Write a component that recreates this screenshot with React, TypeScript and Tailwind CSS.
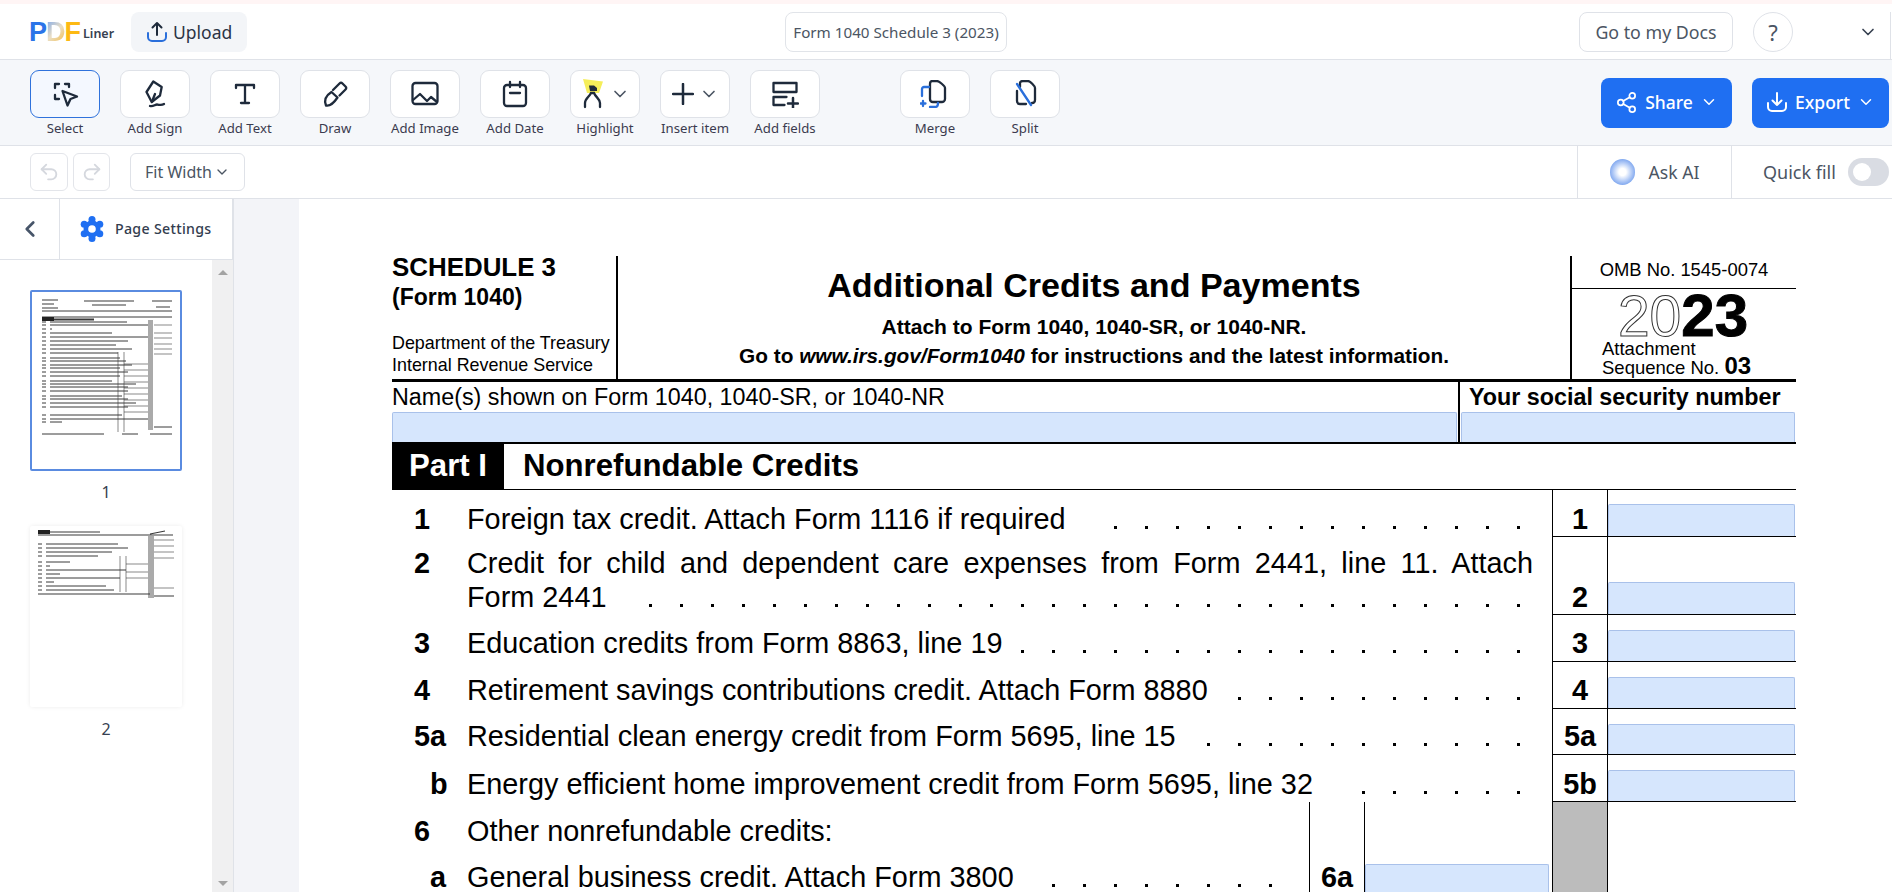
import { ChevronDown, ChevronLeft, Redo2, Share2, Undo2 } from "lucide-react";
import type { ReactNode } from "react";

const DARK = "#1e2a3b";
const BLUE = "#2a6fdb";

function Logo() {
  return (
    <div className="flex h-[24px] items-end font-['Liberation_Sans',sans-serif] font-bold leading-[24px]">
      <span className="text-[27px] tracking-[-1px] text-[#2b74e8]">P</span>
      <span className="bg-[linear-gradient(135deg,#7ea8ec,#eadfc6_50%,#f5b93c)] bg-clip-text text-[27px] tracking-[-1px] text-transparent">D</span>
      <span className="text-[27px] text-[#fdb913]">F</span>
      <span className="ml-[2px] font-['Noto_Sans',sans-serif] text-[12.500px] font-semibold leading-[20px] text-[#374151]">Liner</span>
    </div>
  );
}

function TrayArrow({ up, color, tray }: { up?: boolean; color: string; tray: string }) {
  return (
    <svg width="22" height="22" viewBox="0 0 22 22" fill="none" strokeWidth="2" strokeLinecap="round" strokeLinejoin="round">
      {up ? (
        <path d="M11 14V2M6.5 6.5 11 2l4.5 4.5" stroke={color} />
      ) : (
        <path d="M11 2v12M6.5 9.5 11 14l4.5-4.5" stroke={color} />
      )}
      <path d="M2 12v4a4 4 0 0 0 4 4h10a4 4 0 0 0 4-4v-4" stroke={tray} />
    </svg>
  );
}

function Icon({ children, w = 28, h = 28 }: { children: ReactNode; w?: number; h?: number }) {
  return (
    <svg width={w} height={h} viewBox={`0 0 ${w} ${h}`} fill="none" stroke={DARK} strokeWidth="2.300" strokeLinecap="round" strokeLinejoin="round">
      {children}
    </svg>
  );
}

const SelectIcon = (
  <Icon>
    <path d="M4 8V4h4M14 4h4v3M4 15v4h4" />
    <path d="M11.5 11 26 16.5l-6.5 2.5-3 6.5z" />
  </Icon>
);
const SignIcon = (
  <Icon>
    <path d="M12.3 1.5 20.7 7 19 15.5 10.7 22 5.5 12z" />
    <path d="M11 21.5 14 14" />
    <path d="M9 26c3 1 5-1.5 7-1.5s4 1.5 7-.5" />
  </Icon>
);
const TextIcon = (
  <Icon>
    <path d="M5 8V5h18v3M14 5v18M10 23h8" />
  </Icon>
);
const DrawIcon = (
  <Icon>
    <path d="M5 25.500c-2-5 0-10 5.500-13.500l6 5.500c-3 4.500-6.500 9-11.500 8z" />
    <path d="M12 10l6.500-6.500c1-1 2-1 3 0l3 3c1 1 1 2 0 3l-6 6" />
  </Icon>
);
const ImageIcon = (
  <Icon>
    <rect x="1.500" y="3" width="25" height="21" rx="3" />
    <path d="M2 20l7-6 7 7M16 21l4-4 6 5" />
  </Icon>
);
const DateIcon = (
  <Icon>
    <rect x="3" y="5" width="22" height="21" rx="3" />
    <path d="M9 2v5M19 2v5M9 13h10" />
  </Icon>
);
const HighlightIcon = (
  <svg width="24" height="30" viewBox="0 0 24 30" fill="none" stroke={DARK} strokeWidth="2.300" strokeLinecap="round">
    <path d="M2 0 22 2.500 18 14H6z" fill="#f5ee5a" stroke="none" />
    <path d="M8 6.500h5l3 2.500v3H9z" fill={DARK} stroke="none" />
    <path d="M4 28v-4c0-4 4-6 6-10h3c1.500 4 6 6 6 10v4" />
  </svg>
);
const PlusIcon = (
  <Icon w={22} h={22}>
    <path d="M11 1v20M1 11h20" strokeWidth="2.500" />
  </Icon>
);
const FieldsIcon = (
  <Icon>
    <rect x="2.500" y="3" width="23" height="9" />
    <path d="M2.500 17v8h11M2.500 17h13" />
    <path d="M22 18v11M17 23.500h10" strokeWidth="2.500" />
  </Icon>
);
const MergeIcon = (
  <svg width="30" height="28" viewBox="0 0 30 28" fill="none" strokeWidth="2.300" strokeLinecap="round" strokeLinejoin="round">
    <path d="M12 1h5c2 0 8 5 8 7v11c0 2-2 3-3 3h-9c-2 0-3-1-3-3V4c0-2 1-3 2-3z" stroke={DARK} />
    <path d="M9 7H4c-1 0-2 1-2 2v7" stroke={BLUE} />
    <path d="M3 21v5M.5 23.500h5" stroke={BLUE} />
    <path d="M10 27h5c2 0 3-2 3-4" stroke={BLUE} />
  </svg>
);
const SplitIcon = (
  <svg width="28" height="28" viewBox="0 0 28 28" fill="none" strokeWidth="2.300" strokeLinecap="round" strokeLinejoin="round">
    <path d="M9 7V3c0-1 1-2 3-2h5c2 0 7 5 7 7v12c0 2-1 3-3 3M6 11v10c0 2 1 3 3 3h6" stroke={DARK} />
    <path d="M6 4l14 21" stroke={BLUE} />
  </svg>
);

function Tool({ label, icon, active, menu }: { label: string; icon: ReactNode; active?: boolean; menu?: boolean }) {
  return (
    <div className="flex w-[70px] flex-col items-center">
      <button
        className={`flex h-[48px] w-[70px] items-center justify-center rounded-[9px] border ${
          active ? "border-[#2f72dc] bg-[#f4f8ff]" : "border-[#dfe2e8] bg-white"
        }`}
      >
        {icon}
        {menu && <ChevronDown size={20} color="#4b5563" className="ml-[5px]" />}
      </button>
      <span className="mt-[1px] whitespace-nowrap text-[13.200px] leading-[18px] text-[#3b3b4f]">{label}</span>
    </div>
  );
}

function Gear() {
  const lobes = [30, 90, 150, 210, 270, 330];
  return (
    <svg width="24" height="26" viewBox="-12 -13 24 26">
      {lobes.map((a) => (
        <circle key={a} cx={9 * Math.cos((a * Math.PI) / 180)} cy={9.500 * Math.sin((a * Math.PI) / 180)} r="3.500" fill="#1f6ff2" />
      ))}
      <circle r="8.500" fill="#1f6ff2" />
      <circle r="3.800" fill="white" />
    </svg>
  );
}

const thumbOne: [number, number][] = [
  [30, 95], [33, 116], [37, 20], [41, 80], [45, 116], [49, 96], [53, 84], [57, 100], [61, 86], [66, 88],
  [69, 94], [73, 100], [76, 88], [80, 96], [84, 88], [89, 80], [92, 104], [95, 96], [99, 96], [104, 90],
  [107, 96], [111, 104], [115, 96], [123, 90], [127, 116], [130, 30],
];
const thumbTwo: [number, number][] = [
  [14, 88], [18, 98], [22, 82], [26, 68], [32, 40], [36, 20], [40, 96], [44, 30], [48, 90], [52, 24], [56, 76],
  [60, 84],
];

function Thumb({ page, active }: { page: number; active?: boolean }) {
  const rows = page === 1 ? thumbOne : thumbTwo;
  return (
    <div className={`h-[181px] w-[152px] rounded-[2px] bg-white ${active ? "border-2 border-[#5a8be0]" : "shadow-[0_0_4px_rgba(0,0,0,0.08)]"}`}>
      <svg width="148" height="176" viewBox="0 0 148 176" className="blur-[0.6px]" stroke="#3a3a3a">
        {page === 1 ? (
          <>
            <path d="M10 8h16M10 12h12M52 9h50M60 13h34M10 16h16M120 9h20M124 15h14" strokeWidth="1.200" />
            <path d="M10 19h130M10 25h130" strokeWidth="1" />
            <rect x="10" y="25" width="12" height="4" fill="#222" stroke="none" />
            <path d="M22 27.500h40" strokeWidth="2" />
            <rect x="116" y="28" width="5" height="110" fill="#aaa" stroke="none" />
            <path d="M122 33h18M122 41h18M122 46h18M122 52h18M122 57h18M122 62h18M86 60v80M92 60v80" strokeWidth="0.600" />
            <path d="M92 72h24M92 78h24M92 84h24M92 90h24M92 96h24M92 102h24M92 108h24M92 114h24M92 120h24" strokeWidth="0.600" />
            <path d="M10 142h62M90 142h16M118 142h22M122 135h18" strokeWidth="1" />
          </>
        ) : (
          <>
            <rect x="8" y="4" width="12" height="4" fill="#222" stroke="none" />
            <path d="M20 6h50M8 9h135M120 8l15-3" strokeWidth="1.200" />
            <rect x="118" y="10" width="6" height="62" fill="#aaa" stroke="none" />
            <path d="M124 14h20M124 20h20M124 26h20M124 32h20M124 62h20M90 30v36M96 30v36M96 38h22M96 46h22M96 52h22" strokeWidth="0.600" />
            <path d="M8 68h112M124 70h20" strokeWidth="1.200" />
          </>
        )}
        {rows.map(([y, end]) => (
          <path key={y} d={`M${page === 1 ? 10 : 8} ${page === 1 ? y : y + 4}h4M${page === 1 ? 18 : 16} ${page === 1 ? y : y + 4}H${end}`} strokeWidth="1" />
        ))}
      </svg>
    </div>
  );
}

function Dots({ count }: { count: number }) {
  return (
    <span className="ml-auto flex gap-[28px]">
      {Array.from({ length: count }, (_, i) => (
        <span key={i} className="block h-[3px] w-[3px] bg-black" />
      ))}
    </span>
  );
}

const Field = ({ h }: { h: string }) => (
  <div className={`mt-auto w-[187px] rounded-t-[2px] border border-b-0 border-[#a9c1ea] bg-[#d6e6fd] ${h}`} />
);

function LineNo({ no, sub }: { no: string; sub?: boolean }) {
  return <span className={`w-[75px] shrink-0 font-bold ${sub ? "pl-[38px]" : "pl-[22px]"}`}>{no}</span>;
}

type Row = { no: string; right: string; text: string; dots: number; height: string; pad: string; field: string; sub?: boolean };

const rows: Row[] = [
  { no: "3", right: "3", text: "Education credits from Form 8863, line 19", dots: 17, height: "h-[47px]", pad: "pt-[11px]", field: "h-[31px]" },
  { no: "4", right: "4", text: "Retirement savings contributions credit. Attach Form 8880", dots: 10, height: "h-[47px]", pad: "pt-[11px]", field: "h-[31px]" },
  { no: "5a", right: "5a", text: "Residential clean energy credit from Form 5695, line 15", dots: 11, height: "h-[46px]", pad: "pt-[10px]", field: "h-[30px]" },
  { no: "b", right: "5b", text: "Energy efficient home improvement credit from Form 5695, line 32", dots: 6, height: "h-[47px]", pad: "pt-[12px]", field: "h-[31px]", sub: true },
];

function RightCell({ label, pad, field }: { label: string; pad: string; field: string }) {
  return (
    <div className="flex w-[244px] shrink-0 border-b border-black">
      <div className={`w-[56px] border-x border-black text-center font-bold ${pad}`}>{label}</div>
      <Field h={field} />
    </div>
  );
}

function TaxForm() {
  return (
    <div className="w-[1404px] font-['Liberation_Sans',sans-serif] text-black">
      {/* header */}
      <div className="flex h-[126px] border-b-[3px] border-black">
        <div className="flex w-[226px] flex-col justify-between border-r-2 border-black pb-[3px]">
          <div>
            <div className="mt-[1px] text-[25.900px] font-bold leading-[20px]">SCHEDULE 3</div>
            <div className="mt-[5px] text-[23px] font-bold leading-[30px]">(Form 1040)</div>
          </div>
          <div className="text-[17.900px] leading-[22px]">
            <div>Department of the Treasury</div>
            <div>Internal Revenue Service</div>
          </div>
        </div>
        <div className="flex flex-1 flex-col items-center">
          <div className="mt-[10px] text-[34.050px] font-bold leading-[38px]">Additional Credits and Payments</div>
          <div className="mt-[9px] text-[21px] font-bold leading-[28px]">Attach to Form 1040, 1040-SR, or 1040-NR.</div>
          <div className="text-[20.800px] font-bold leading-[29px]">
            Go to <i>www.irs.gov/Form1040</i> for instructions and the latest information.
          </div>
        </div>
        <div className="w-[226px] border-l-2 border-black">
          <div className="h-[33px] border-b border-black text-center text-[18.400px] leading-[28px]">OMB No. 1545-0074</div>
          <div className="mt-[3px] flex h-[47px] items-baseline justify-center pr-[2px] leading-[47px]">
            <span className="text-[57px] text-white [-webkit-text-stroke:1px_#333]">20</span>
            <span className="text-[60px] font-bold [-webkit-text-stroke:1px_black]">23</span>
          </div>
          <div className="pl-[30px] text-[18.500px] leading-[19px]">
            <div>Attachment</div>
            <div>
              Sequence No. <span className="text-[24px] font-bold leading-[0]">03</span>
            </div>
          </div>
        </div>
      </div>

      {/* name row */}
      <div className="flex h-[62px] border-b-2 border-black text-[23.300px] leading-[30px]">
        <div className="flex w-[1066px] flex-col justify-between">
          <div>Name(s) shown on Form 1040, 1040-SR, or 1040-NR</div>
          <div className="h-[30px] w-[1065px] rounded-t-[2px] border border-b-0 border-[#a9c1ea] bg-[#d6e6fd]" />
        </div>
        <div className="flex flex-1 flex-col justify-between border-l-2 border-black pl-[1px]">
          <div className="pl-[8px] font-bold">Your social security number</div>
          <div className="h-[30px] w-[334px] rounded-t-[2px] border border-b-0 border-[#a9c1ea] bg-[#d6e6fd]" />
        </div>
      </div>

      {/* part heading */}
      <div className="flex h-[46px] items-stretch border-b border-black text-[31.200px] font-bold leading-[44px]">
        <div className="w-[112px] bg-black pl-[17px] text-white">Part I</div>
        <div className="pl-[19px]">Nonrefundable Credits</div>
      </div>

      {/* lines */}
      <div className="text-[28.850px] leading-[34px]">
        <div className="flex h-[47px]">
          <div className="flex flex-1 items-baseline pr-[32px] pt-[12px]">
            <LineNo no="1" />
            <span>Foreign tax credit. Attach Form 1116 if required</span>
            <Dots count={14} />
          </div>
          <RightCell label="1" pad="pt-[12px]" field="h-[32px]" />
        </div>
        <div className="flex h-[78px]">
          <div className="flex-1 pr-[19px] pt-[9px]">
            <div className="flex">
              <LineNo no="2" />
              <span className="flex-1 [text-align-last:justify]">Credit for child and dependent care expenses from Form 2441, line 11. Attach</span>
            </div>
            <div className="flex items-baseline pr-[13px]">
              <span className="w-[75px] shrink-0" />
              <span>Form 2441</span>
              <Dots count={29} />
            </div>
          </div>
          <RightCell label="2" pad="pt-[43px]" field="h-[32px]" />
        </div>
        {rows.map((r) => (
          <div key={r.no} className={`flex ${r.height}`}>
            <div className={`flex flex-1 items-baseline pr-[32px] ${r.pad}`}>
              <LineNo no={r.no} sub={r.sub} />
              <span className="whitespace-nowrap">{r.text}</span>
              <Dots count={r.dots} />
            </div>
            <RightCell label={r.right} pad={r.pad} field={r.field} />
          </div>
        ))}
        <div className="flex">
          <div className="flex w-[917px] shrink-0 flex-col pr-[37px]">
            <div className="flex pt-[12px]">
              <LineNo no="6" />
              <span>Other nonrefundable credits:</span>
            </div>
            <div className="flex items-baseline pt-[12px]">
              <LineNo no="a" sub />
              <span>General business credit. Attach Form 3800</span>
              <Dots count={8} />
            </div>
          </div>
          <div className="w-[56px] border-x border-black pt-[58px] text-center font-bold">6a</div>
          <div className="flex w-[187px] flex-col pt-[62px]">
            <div className="h-[40px] w-[184px] rounded-t-[2px] border border-b-0 border-[#a9c1ea] bg-[#d6e6fd]" />
          </div>
          <div className="h-[100px] w-[56px] border-x border-black bg-[#bcbcbc]" />
        </div>
      </div>
    </div>
  );
}

export default function App() {
  return (
    <div className="flex h-screen w-full flex-col overflow-hidden bg-white font-['Noto_Sans',sans-serif] text-[#374151]">
      <div className="h-[4px] shrink-0 bg-[#fff5f5]" />

      {/* top bar */}
      <div className="flex h-[56px] shrink-0 items-start border-b border-[#dfe2e8] pt-[8px]">
        <div className="ml-[29px] mt-[8px] w-[102px]">
          <Logo />
        </div>
        <button className="flex h-[40px] w-[116px] items-center gap-[5px] rounded-[8px] bg-[#f3f5f8] pl-[15px] text-[17.500px] text-[#2b3445]">
          <TrayArrow up color={DARK} tray={BLUE} />
          Upload
        </button>
        <div className="ml-[538px] flex h-[40px] w-[222px] items-center justify-center rounded-[8px] border border-[#e1e4e9] text-[15.200px] text-[#4b5563]">
          Form 1040 Schedule 3 (2023)
        </div>
        <button className="ml-auto flex h-[40px] w-[154px] items-center justify-center rounded-[8px] border border-[#dfe2e8] text-[17.800px] text-[#4b5563]">
          Go to my Docs
        </button>
        <div className="ml-[20px] flex h-[40px] w-[40px] items-center justify-center rounded-full border border-[#dfe2e8] text-[22px] text-[#4b5563]">?</div>
        <ChevronDown size={20} color="#374151" className="ml-[65px] mt-[10px]" />
        <div className="ml-[12px] h-[47px] w-px bg-[#dfe2e8]" />
        <div className="w-px" />
      </div>

      {/* tools */}
      <div className="flex h-[86px] shrink-0 gap-[20px] border-b border-[#dfe2e8] bg-[#f5f7fa] pl-[30px] pr-[3px] pt-[10px]">
        <Tool label="Select" icon={SelectIcon} active />
        <Tool label="Add Sign" icon={SignIcon} />
        <Tool label="Add Text" icon={TextIcon} />
        <Tool label="Draw" icon={DrawIcon} />
        <Tool label="Add Image" icon={ImageIcon} />
        <Tool label="Add Date" icon={DateIcon} />
        <Tool label="Highlight" icon={HighlightIcon} menu />
        <Tool label="Insert item" icon={PlusIcon} menu />
        <Tool label="Add fields" icon={FieldsIcon} />
        <div className="ml-[60px] flex gap-[20px]">
          <Tool label="Merge" icon={MergeIcon} />
          <Tool label="Split" icon={SplitIcon} />
        </div>
        <button className="ml-auto mt-[8px] flex h-[50px] w-[131px] items-center justify-center gap-[7px] rounded-[8px] bg-[#1f6ff2] pb-[2px] text-[17.500px] font-medium text-white">
          <Share2 size={23} strokeWidth={1.8} />
          Share
          <ChevronDown size={18} />
        </button>
        <button className="mt-[8px] flex h-[50px] w-[137px] items-center justify-center gap-[7px] rounded-[8px] bg-[#1f6ff2] pb-[2px] text-[17.500px] font-medium text-white">
          <TrayArrow color="white" tray="white" />
          Export
          <ChevronDown size={18} />
        </button>
      </div>

      {/* view options */}
      <div className="flex h-[53px] shrink-0 border-b border-[#dfe2e8]">
        <div className="flex items-start gap-[5px] pl-[30px] pt-[7px]">
          <div className="flex h-[38px] w-[38px] items-center justify-center rounded-[6px] border border-[#e3e5ea]">
            <Undo2 size={22} color="#d5d8de" />
          </div>
          <div className="flex h-[38px] w-[37px] items-center justify-center rounded-[6px] border border-[#e3e5ea]">
            <Redo2 size={22} color="#d5d8de" />
          </div>
          <div className="ml-[15px] flex h-[38px] w-[115px] items-center justify-center gap-[2px] rounded-[6px] border border-[#dfe2e8] text-[16px] text-[#4b5563]">
            Fit Width
            <ChevronDown size={16} />
          </div>
        </div>
        <div className="ml-auto flex w-[155px] items-center justify-center gap-[14px] border-x border-[#dfe2e8] text-[17.600px] text-[#4b5563]">
          <div className="h-[26px] w-[25px] rounded-full bg-[radial-gradient(circle,#ffffff_20%,#a9c4f5_55%,#3f7be6_100%)]" />
          Ask AI
        </div>
        <div className="flex w-[160px] items-center pl-[31px] text-[18px] text-[#4b5563]">
          Quick fill
          <div className="ml-[12px] flex h-[28px] w-[41px] items-center rounded-full bg-[#d9dce3] pl-[5px]">
            <div className="h-[18px] w-[18px] rounded-full bg-white" />
          </div>
        </div>
      </div>

      {/* workspace */}
      <div className="flex min-h-0 flex-1">
        <div className="flex w-[233px] shrink-0 flex-col">
          <div className="flex h-[61px] shrink-0 border-b border-r border-[#dfe2e8]">
            <div className="flex w-[60px] items-center justify-center border-r border-[#dfe2e8]">
              <ChevronLeft size={26} color="#475569" strokeWidth={2.500} />
            </div>
            <div className="flex flex-1 items-center gap-[11px] pl-[20px] text-[14.200px] font-medium tracking-[0.3px] text-[#333d4f]">
              <Gear />
              Page Settings
            </div>
          </div>
          <div className="flex min-h-0 flex-1">
            <div className="flex w-[212px] flex-col items-start pl-[30px] pt-[30px]">
              <Thumb page={1} active />
              <div className="w-[152px] pt-[10px] text-center text-[16px] leading-[22px]">1</div>
              <div className="mt-[23px]">
                <Thumb page={2} />
              </div>
              <div className="w-[152px] pt-[11px] text-center text-[16px] leading-[22px]">2</div>
            </div>
            <div className="flex w-[21px] flex-col items-center justify-between bg-[#f0f0f1] pb-[6px] pt-[10px]">
              <div className="h-0 w-0 border-x-[5px] border-b-[5px] border-x-transparent border-b-[#a3a3a3]" />
              <div className="h-0 w-0 border-x-[5px] border-t-[5px] border-x-transparent border-t-[#a3a3a3]" />
            </div>
          </div>
        </div>
        <div className="w-[66px] shrink-0 border-l border-[#dfe2e8] bg-[#f3f4f8]" />
        <div className="flex-1 overflow-hidden bg-white pl-[93px] pt-[57px]">
          <TaxForm />
        </div>
      </div>
    </div>
  );
}
